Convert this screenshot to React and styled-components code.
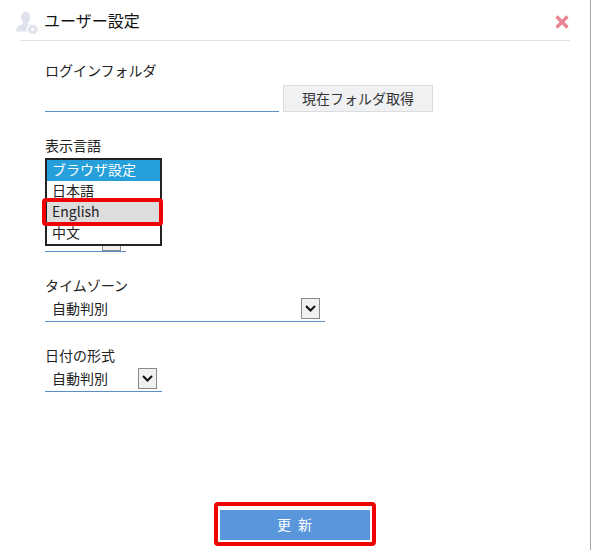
import React from "react";
import styled, { createGlobalStyle } from "styled-components";

const Global = createGlobalStyle`
  html, body { margin: 0; padding: 0; background: #fff; }
  body { font-family: "Noto Sans CJK JP", "Noto Sans", sans-serif; color: #222; }
`;
const Page = styled.div`
  position: relative;
  box-sizing: border-box;
  width: 591px;
  height: 550px;
  border-right: 1px solid #a8a8a8;
  overflow: hidden;
  display: flex;
  flex-direction: column;
`;
const Header = styled.header`
  box-sizing: border-box;
  height: 41px;
  margin: 0 20px;
  border-bottom: 1px solid #e0e0e8;
  display: flex;
  align-items: center;
  position: relative;
`;
const UserIcon = styled.svg`
  width: 24px;
  height: 28px;
  margin-left: -5px;
  flex: none;
`;
const Title = styled.h1`
  margin: 0 0 0 5px;
  font-size: 16px;
  line-height: 22px;
  font-weight: 400;
  color: #111;
`;
const Close = styled.svg`
  width: 14px;
  height: 14px;
  margin: 4px 1px 0 auto;
`;
const Form = styled.main`
  flex: 1;
  padding: 19px 0 0 45px;
  display: flex;
  flex-direction: column;
`;
const Field = styled.section`
  position: relative;
  height: ${p => p.$h}px;
`;
const Label = styled.div`
  font-size: 14px;
  line-height: 20px;
  height: 20px;
  color: #222;
`;
const Row = styled.div`
  display: flex;
  align-items: flex-end;
  gap: 4px;
  margin-top: 3px;
`;
const TextInput = styled.div`
  box-sizing: border-box;
  width: 234px;
  height: 29px;
  border-bottom: 1px solid #5b8fc7;
`;
const FetchButton = styled.button`
  box-sizing: border-box;
  width: 150px;
  height: 27px;
  border: 1px solid #dcdcdc;
  background: #f0f1f3;
  color: #333;
  font: 400 14px/1 "Noto Sans CJK JP", sans-serif;
  padding: 0 0 2px;
`;
const Select = styled.div`
  box-sizing: border-box;
  width: ${p => p.$w}px;
  height: 26px;
  margin-top: 1px;
  border-bottom: 1px solid #5b8fc7;
  display: flex;
  align-items: center;
  padding: 0 5px 1px 7px;
  font-size: 14px;
  color: #222;
`;
const Arrow = styled.span`
  box-sizing: border-box;
  margin-left: auto;
  width: 19px;
  height: 21px;
  background: #f0f0f0;
  border: 1px solid #8a8a8a;
  display: flex;
  align-items: center;
  justify-content: center;
`;
const ListBox = styled.ul`
  position: absolute;
  left: 0;
  top: 23px;
  z-index: 2;
  box-sizing: border-box;
  width: 117px;
  height: 88px;
  margin: 0;
  padding: 0;
  list-style: none;
  border: 2px solid #222;
  background: #fff;
`;
const Option = styled.li`
  box-sizing: border-box;
  height: 21px;
  padding-left: 5px;
  font-size: 14px;
  line-height: 19px;
  color: ${p => (p.$selected ? "#fff" : "#222")};
  background: ${p => (p.$selected ? "#26a0da" : p.$hover ? "#dddddd" : "#fff")};
`;
const Highlight = styled.div`
  position: absolute;
  box-sizing: border-box;
  border: 4px solid #f00000;
  border-radius: 4px;
  z-index: 3;
`;
const ListHighlight = styled(Highlight)`
  left: -3px;
  top: 63px;
  width: 121px;
  height: 28px;
`;
const HiddenSelect = styled.div`
  position: absolute;
  left: 0;
  top: 111px;
  box-sizing: border-box;
  width: 81px;
  height: 6px;
  border-bottom: 1px solid #5b8fc7;
  display: flex;
  padding-left: 57px;
`;
const HiddenArrow = styled.span`
  box-sizing: border-box;
  width: 19px;
  height: 5px;
  background: #f0f0f0;
  border: 1px solid #8a8a8a;
  border-top: 0;
`;
const Footer = styled.footer`
  position: relative;
  height: 40px;
  display: flex;
  justify-content: center;
`;
const Submit = styled.button`
  box-sizing: border-box;
  width: 150px;
  height: 30px;
  margin-left: -1px;
  border: 0;
  background: #5a96dc;
  color: #fff;
  font: 400 14px/1 "Noto Sans CJK JP", sans-serif;
  padding: 0 0 2px;
  word-spacing: 4px;
`;
const SubmitHighlight = styled(Highlight)`
  left: 214px;
  top: -8px;
  width: 162px;
  height: 44px;
`;

const Chevron = () => (
  <svg width="11" height="7" viewBox="0 0 11 7">
    <path d="M1 1 L5.5 5.5 L10 1" fill="none" stroke="#111" strokeWidth="2" />
  </svg>
);

export default function App() {
  return (
    <Page>
      <Global />
      <Header>
        <UserIcon viewBox="0 0 24 28">
          <ellipse cx="10.7" cy="11.5" rx="4.6" ry="6" fill="#dfe1ee" />
          <path d="M8.5 15 h4.5 l.5 3.5 c2 .6 3.2 1.2 3.5 2.5 L14 25.5 H1 c0 -3.5 1.5 -5.5 4 -6.5 c2 -.8 3.5 -1 3.5 -4 z" fill="#dfe1ee" />
          <circle cx="17.7" cy="23.5" r="6.4" fill="#fff" />
          <circle cx="17.7" cy="23.5" r="2.9" fill="none" stroke="#dfe1ee" strokeWidth="2.4" />
          <circle cx="17.7" cy="23.5" r="4.6" fill="none" stroke="#dfe1ee" strokeWidth="1.4" strokeDasharray="1.8 1.8" />
        </UserIcon>
        <Title>ユーザー設定</Title>
        <Close viewBox="0 0 14 14">
          <path d="M1.5 1.5 L12.5 12.5 M12.5 1.5 L1.5 12.5" stroke="#e9838f" strokeWidth="3.2" />
        </Close>
      </Header>
      <Form>
        <Field $h={75}>
          <Label>ログインフォルダ</Label>
          <Row>
            <TextInput />
            <FetchButton>現在フォルダ取得</FetchButton>
          </Row>
        </Field>
        <Field $h={140}>
          <Label>表示言語</Label>
          <ListBox>
            <Option $selected>ブラウザ設定</Option>
            <Option>日本語</Option>
            <Option $hover>English</Option>
            <Option>中文</Option>
          </ListBox>
          <ListHighlight />
          <HiddenSelect><HiddenArrow /></HiddenSelect>
        </Field>
        <Field $h={70}>
          <Label>タイムゾーン</Label>
          <Select $w={280}>自動判別<Arrow><Chevron /></Arrow></Select>
        </Field>
        <Field $h={100}>
          <Label>日付の形式</Label>
          <Select $w={117}>自動判別<Arrow><Chevron /></Arrow></Select>
        </Field>
      </Form>
      <Footer>
        <Submit>更 新</Submit>
        <SubmitHighlight />
      </Footer>
    </Page>
  );
}
